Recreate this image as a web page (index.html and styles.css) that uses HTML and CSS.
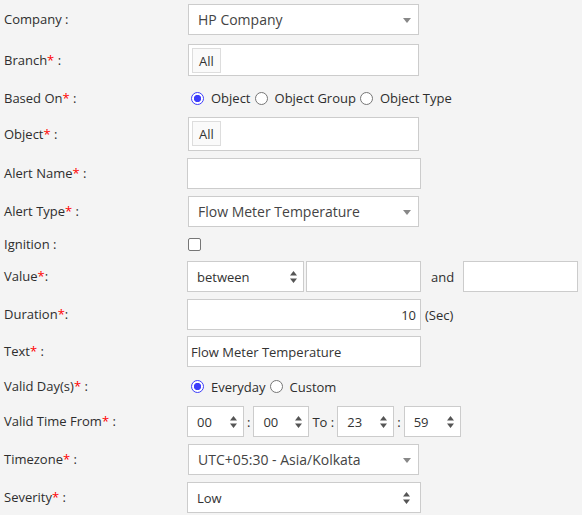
FILE: index.html
```html
<!DOCTYPE html>
<html>
<head>
<meta charset="utf-8">
<link rel="stylesheet" href="styles.css">
</head>
<body>
<div class="form">
  <div class="row h40">
    <div class="lbl">Company :</div>
    <div class="fld"><div class="chosen"><span>HP Company</span><svg class="tri" width="8" height="5" viewBox="0 0 8 5"><path d="M0 0H8L4 5Z"/></svg></div></div>
  </div>
  <div class="row h40">
    <div class="lbl c32">Branch<span class="req">*</span> :</div>
    <div class="fld c32"><div class="multi"><span class="chip">All</span></div></div>
  </div>
  <div class="row h33">
    <div class="lbl c28">Based On<span class="req">*</span> :</div>
    <div class="fld c28 radios">
      <span class="radio on"></span><span class="rtext">Object</span>
      <span class="radio"></span><span class="rtext">Object Group</span>
      <span class="radio"></span><span class="rtext">Object Type</span>
    </div>
  </div>
  <div class="row h41">
    <div class="lbl c34">Object<span class="req">*</span> :</div>
    <div class="fld c34"><div class="multi tall"><span class="chip">All</span></div></div>
  </div>
  <div class="row h38">
    <div class="lbl">Alert Name<span class="req">*</span> :</div>
    <div class="fld"><div class="input w234"></div></div>
  </div>
  <div class="row h33">
    <div class="lbl">Alert Type<span class="req">*</span> :</div>
    <div class="fld"><div class="chosen"><span>Flow Meter Temperature</span><svg class="tri" width="8" height="5" viewBox="0 0 8 5"><path d="M0 0H8L4 5Z"/></svg></div></div>
  </div>
  <div class="row h32">
    <div class="lbl">Ignition :</div>
    <div class="fld"><span class="check"></span></div>
  </div>
  <div class="row h38">
    <div class="lbl">Value<span class="req">*</span>:</div>
    <div class="fld">
      <div class="nsel w117"><span>between</span><svg class="ud" width="7" height="12" viewBox="0 0 7 12"><path d="M3.5 0L7 4.5H0Z M0 7.5H7L3.5 12Z"/></svg></div>
      <div class="input w115 ml2"></div>
      <span class="and">and</span>
      <div class="input w115"></div>
    </div>
  </div>
  <div class="row h37">
    <div class="lbl">Duration<span class="req">*</span>:</div>
    <div class="fld"><div class="input w234 right">10</div><span class="sec">(Sec)</span></div>
  </div>
  <div class="row h35">
    <div class="lbl">Text<span class="req">*</span> :</div>
    <div class="fld"><div class="input w234 txt">Flow Meter Temperature</div></div>
  </div>
  <div class="row h35">
    <div class="lbl">Valid Day(s)<span class="req">*</span> :</div>
    <div class="fld radios">
      <span class="radio on"></span><span class="rtext">Everyday</span>
      <span class="radio"></span><span class="rtext">Custom</span>
    </div>
  </div>
  <div class="row h38">
    <div class="lbl">Valid Time From<span class="req">*</span> :</div>
    <div class="fld">
      <div class="nsel w57"><span>00</span><svg class="ud" width="7" height="12" viewBox="0 0 7 12"><path d="M3.5 0L7 4.5H0Z M0 7.5H7L3.5 12Z"/></svg></div>
      <span class="sep">:</span>
      <div class="nsel w56"><span>00</span><svg class="ud" width="7" height="12" viewBox="0 0 7 12"><path d="M3.5 0L7 4.5H0Z M0 7.5H7L3.5 12Z"/></svg></div>
      <span class="to">To :</span>
      <div class="nsel w57"><span>23</span><svg class="ud" width="7" height="12" viewBox="0 0 7 12"><path d="M3.5 0L7 4.5H0Z M0 7.5H7L3.5 12Z"/></svg></div>
      <span class="sep">:</span>
      <div class="nsel w57"><span>59</span><svg class="ud" width="7" height="12" viewBox="0 0 7 12"><path d="M3.5 0L7 4.5H0Z M0 7.5H7L3.5 12Z"/></svg></div>
    </div>
  </div>
  <div class="row h38">
    <div class="lbl">Timezone<span class="req">*</span> :</div>
    <div class="fld"><div class="chosen"><span>UTC+05:30 - Asia/Kolkata</span><svg class="tri" width="8" height="5" viewBox="0 0 8 5"><path d="M0 0H8L4 5Z"/></svg></div></div>
  </div>
  <div class="row h33">
    <div class="lbl">Severity<span class="req">*</span> :</div>
    <div class="fld"><div class="nsel w234"><span>Low</span><svg class="ud" width="7" height="12" viewBox="0 0 7 12"><path d="M3.5 0L7 4.5H0Z M0 7.5H7L3.5 12Z"/></svg></div></div>
  </div>
</div>
</body>
</html>
```

FILE: styles.css
```css
html, body {
  margin: 0;
  padding: 0;
  background: #f4f4f4;
}
body {
  font-family: "Open Sans", "Liberation Sans", sans-serif;
  font-size: 13px;
  color: #2e2e2e;
  overflow: hidden;
}
.form {
  padding: 4px 0 0 4px;
}
.row {
  display: flex;
  align-items: flex-start;
}
.h40 { height: 40px; }
.h41 { height: 41px; }
.h38 { height: 38px; }
.h37 { height: 37px; }
.h35 { height: 35px; }
.h33 { height: 33px; }
.h32 { height: 32px; }

.lbl {
  width: 183px;
  flex: none;
  height: 31px;
  line-height: 31px;
  white-space: nowrap;
}
.lbl.c32 { height: 32px; line-height: 32px; }
.lbl.c34 { height: 34px; line-height: 34px; }
.lbl.c28 { height: 28px; line-height: 28px; }

.fld {
  flex: none;
  height: 31px;
  display: flex;
  align-items: center;
}
.fld.c32 { height: 32px; }
.fld.c34 { height: 34px; }
.fld.c28 { height: 28px; }

.req {
  color: #ff0000;
}

.chosen {
  box-sizing: border-box;
  margin-left: 1px;
  width: 231px;
  height: 31px;
  border: 1px solid #cccccc;
  background: #fff;
  padding: 0 7px 0 9px;
  display: flex;
  align-items: center;
  justify-content: space-between;
  font-size: 14px;
  color: #444;
  white-space: nowrap;
}
.tri {
  fill: #888;
  margin-top: 1px;
}

.multi {
  box-sizing: border-box;
  margin-left: 1px;
  width: 231px;
  height: 32px;
  border: 1px solid #cccccc;
  background: #fff;
  padding: 3px;
  display: flex;
  align-items: flex-start;
}
.multi.tall {
  height: 34px;
}
.chip {
  box-sizing: border-box;
  height: 25px;
  border: 1px solid #dddddd;
  background: #fafafa;
  padding: 0 6px;
  display: flex;
  align-items: center;
  font-size: 13px;
  color: #333;
}

.input {
  box-sizing: border-box;
  height: 31px;
  border: 1px solid #cccccc;
  background: #fff;
  display: flex;
  align-items: center;
  font-size: 13px;
  color: #333;
  white-space: nowrap;
}
.w234 { width: 234px; }
.w115 { width: 115px; }
.w117 { width: 117px; }
.w57 { width: 57px; }
.w56 { width: 56px; }
.ml2 { margin-left: 2px; }
.right {
  justify-content: flex-end;
  padding-right: 4px;
}
.txt {
  padding-left: 3px;
}
.sec {
  margin-left: 4px;
}
.and {
  margin: 0 10px 0 10px;
  width: 22px;
}

.nsel {
  box-sizing: border-box;
  height: 31px;
  border: 1px solid #cccccc;
  background: #fff;
  display: flex;
  align-items: center;
  justify-content: space-between;
  padding: 0 6px 0 9px;
  font-size: 13px;
  color: #333;
  white-space: nowrap;
}
.w234.nsel {
  padding-right: 10px;
}
.ud {
  fill: #555;
}
.sep {
  margin: 0 3px 0 3px;
}
.to {
  margin: 0 3px 0 3px;
}

.radios {
  padding-left: 4px;
  white-space: nowrap;
}
.radio {
  box-sizing: border-box;
  width: 13px;
  height: 13px;
  border: 1px solid #767676;
  border-radius: 50%;
  background: #fff;
  flex: none;
}
.radio.on {
  border: 1.5px solid #3d3dfb;
  background: radial-gradient(circle, #3d3dfb 0 3.4px, #fff 3.9px);
}
.rtext {
  margin: 0 4px 0 7px;
}
.check {
  box-sizing: border-box;
  width: 13px;
  height: 13px;
  border: 1px solid #767676;
  border-radius: 2px;
  background: #fff;
  margin-left: 1px;
}
```
